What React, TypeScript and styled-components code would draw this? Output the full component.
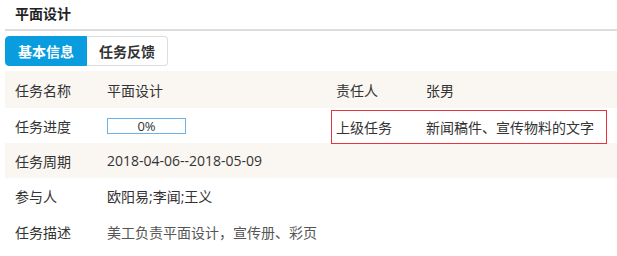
import React from 'react'
import styled, { createGlobalStyle } from 'styled-components'

const GlobalStyle = createGlobalStyle`
  * { box-sizing: border-box; }
  body {
    margin: 0;
    background: #ffffff;
    font-family: "Open Sans", "Noto Sans CJK SC", sans-serif;
    font-size: 14px;
    color: #333333;
  }
`

const Page = styled.div`
  width: 617px;
  padding-left: 5px;
`

const TitleBar = styled.div`
  height: 31px;
  padding-left: 10px;
  display: flex;
  align-items: center;
  padding-bottom: 3px;
  border-bottom: 2px solid #dddddd;
  font-weight: 700;
  font-size: 14px;
  color: #222222;
`

const Tabs = styled.div`
  display: flex;
  margin-top: 5px;
  height: 30px;
`

const Tab = styled.div<{ $active?: boolean }>`
  width: ${p => (p.$active ? '82px' : '81px')};
  display: flex;
  align-items: center;
  justify-content: center;
  font-weight: 700;
  font-size: 14px;
  color: ${p => (p.$active ? '#ffffff' : '#333333')};
  background: ${p => (p.$active ? '#099ddf' : '#ffffff')};
  border: 1px solid ${p => (p.$active ? '#099ddf' : '#dddddd')};
  border-radius: ${p => (p.$active ? '4px 0 0 4px' : '0 4px 4px 0')};
  border-left: ${p => (p.$active ? undefined : 'none')};
`

const Table = styled.div`
  margin-top: 5px;
`

const Row = styled.div<{ $shaded?: boolean; $tall?: boolean }>`
  display: grid;
  grid-template-columns: 102px 224px 1fr;
  height: ${p => (p.$tall ? '38px' : '35px')};
  background: ${p => (p.$shaded ? '#faf6f1' : '#ffffff')};
  align-items: center;
`

const Label = styled.div<{ $flush?: boolean }>`
  padding-left: ${p => (p.$flush ? '0' : '10px')};
  color: #333333;
`

const Value = styled.div<{ $muted?: boolean }>`
  color: ${p => (p.$muted ? '#555555' : '#333333')};
  white-space: nowrap;
`

const Pair = styled.div<{ $marked?: boolean }>`
  display: grid;
  grid-template-columns: 90px 1fr;
  align-items: center;
  align-self: stretch;
  margin: ${p => (p.$marked ? '2px 10px -1px 0' : '0 10px 0 0')};
  padding-left: 4px;
  border: 1px solid ${p => (p.$marked ? '#e8343c' : 'transparent')};
`

const Progress = styled.div`
  width: 79px;
  height: 16px;
  border: 1px solid #6cb2ea;
  display: flex;
  align-items: center;
  justify-content: center;
  font-size: 13px;
  color: #333333;
`

export default function App() {
  return (
    <Page>
      <GlobalStyle />
      <TitleBar>平面设计</TitleBar>
      <Tabs>
        <Tab $active>基本信息</Tab>
        <Tab>任务反馈</Tab>
      </Tabs>
      <Table>
        <Row $shaded style={{ height: 37 }}>
          <Label>任务名称</Label>
          <Value>平面设计</Value>
          <Pair>
            <Label $flush>责任人</Label>
            <Value>张男</Value>
          </Pair>
        </Row>
        <Row>
          <Label>任务进度</Label>
          <Value>
            <Progress>0%</Progress>
          </Value>
          <Pair $marked>
            <Label $flush>上级任务</Label>
            <Value>新闻稿件、宣传物料的文字</Value>
          </Pair>
        </Row>
        <Row $shaded>
          <Label>任务周期</Label>
          <Value>2018-04-06--2018-05-09</Value>
        </Row>
        <Row>
          <Label>参与人</Label>
          <Value>欧阳易;李闻;王义</Value>
        </Row>
        <Row $tall>
          <Label>任务描述</Label>
          <Value $muted>美工负责平面设计，宣传册、彩页</Value>
        </Row>
      </Table>
    </Page>
  )
}
